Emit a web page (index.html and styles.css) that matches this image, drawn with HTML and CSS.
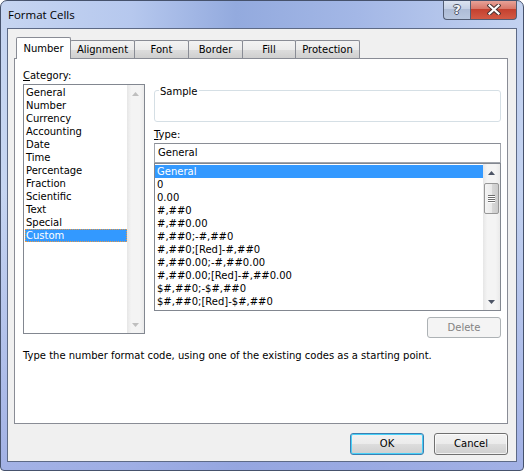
FILE: index.html
```html
<!DOCTYPE html>
<html>
<head>
<meta charset="utf-8">
<link rel="stylesheet" href="styles.css">
</head>
<body>
<div class="window">
  <div class="titlebar">
    <span class="title">Format Cells</span>
    <div class="caption-buttons">
      <div class="cap-btn help">?</div>
      <div class="cap-btn close">
        <svg width="14" height="11" viewBox="0 0 14 11">
          <path d="M2.5 1.5 L11.5 9.5 M11.5 1.5 L2.5 9.5" stroke="#4a3434" stroke-width="4.2" stroke-linecap="square" fill="none"/>
          <path d="M2.5 1.5 L11.5 9.5 M11.5 1.5 L2.5 9.5" stroke="#ffffff" stroke-width="2.2" stroke-linecap="square" fill="none"/>
        </svg>
      </div>
    </div>
  </div>
  <div class="client">
    <div class="tabs">
      <div class="tab active w-number">Number</div>
      <div class="tab w-align">Alignment</div>
      <div class="tab w-font">Font</div>
      <div class="tab w-border">Border</div>
      <div class="tab w-fill">Fill</div>
      <div class="tab w-prot">Protection</div>
    </div>
    <div class="panel">
      <div class="columns">
        <div class="col-left">
          <div class="label"><u>C</u>ategory:</div>
          <div class="listbox cat-list">
            <div class="items">
              <div class="row">General</div>
              <div class="row">Number</div>
              <div class="row">Currency</div>
              <div class="row">Accounting</div>
              <div class="row">Date</div>
              <div class="row">Time</div>
              <div class="row">Percentage</div>
              <div class="row">Fraction</div>
              <div class="row">Scientific</div>
              <div class="row">Text</div>
              <div class="row">Special</div>
              <div class="row selected focused">Custom</div>
            </div>
            <div class="scrollbar disabled">
              <div class="sb-btn"><svg width="7" height="4" viewBox="0 0 7 4"><path d="M0 4 L3.5 0 L7 4 Z" class="arrow"/></svg></div>
              <div class="sb-track"></div>
              <div class="sb-btn"><svg width="7" height="4" viewBox="0 0 7 4"><path d="M0 0 L7 0 L3.5 4 Z" class="arrow"/></svg></div>
            </div>
          </div>
        </div>
        <div class="col-right">
          <div class="sample"><span class="sample-label">Sample</span></div>
          <div class="label type-label"><u>T</u>ype:</div>
          <div class="textbox">General</div>
          <div class="listbox type-list">
            <div class="items">
              <div class="row selected">General</div>
              <div class="row">0</div>
              <div class="row">0.00</div>
              <div class="row">#,##0</div>
              <div class="row">#,##0.00</div>
              <div class="row">#,##0;-#,##0</div>
              <div class="row">#,##0;[Red]-#,##0</div>
              <div class="row">#,##0.00;-#,##0.00</div>
              <div class="row">#,##0.00;[Red]-#,##0.00</div>
              <div class="row">$#,##0;-$#,##0</div>
              <div class="row">$#,##0;[Red]-$#,##0</div>
            </div>
            <div class="scrollbar">
              <div class="sb-btn"><svg width="7" height="4" viewBox="0 0 7 4"><path d="M0 4 L3.5 0 L7 4 Z" class="arrow"/></svg></div>
              <div class="sb-track">
                <div class="thumb">
                  <div class="grip"></div>
                  <div class="grip"></div>
                  <div class="grip"></div>
                  <div class="grip"></div>
                </div>
              </div>
              <div class="sb-btn"><svg width="7" height="4" viewBox="0 0 7 4"><path d="M0 0 L7 0 L3.5 4 Z" class="arrow"/></svg></div>
            </div>
          </div>
          <div class="delete-row"><div class="btn btn-disabled">Delete</div></div>
        </div>
      </div>
      <div class="desc">Type the number format code, using one of the existing codes as a starting point.</div>
    </div>
    <div class="buttons">
      <div class="btn btn-default">OK</div>
      <div class="btn">Cancel</div>
    </div>
  </div>
</div>
</body>
</html>
```
FILE: styles.css
```css
* { box-sizing: border-box; }
html, body { margin: 0; padding: 0; background: #ffffff; }
body {
  font-family: "DejaVu Sans", "Liberation Sans", sans-serif;
  font-size: 10px;
  color: #000;
}
.window {
  width: 524px;
  height: 471px;
  display: flex;
  flex-direction: column;
  border: 1px solid #46526c;
  border-radius: 7px 7px 4px 4px;
  overflow: hidden;
  background:
    linear-gradient(to bottom, rgba(150,165,225,0) 40%, rgba(150,165,225,0.75) 100%),
    linear-gradient(to right, #c6d5f1 0%, #b6c8ee 25%, #93aade 45%, #a3b7e6 68%, #c3d2f0 100%);
}
.titlebar {
  height: 27px;
  flex: none;
  display: flex;
  align-items: flex-start;
  padding-left: 7px;
}
.title {
  font-family: "Open Sans", "Liberation Sans", sans-serif;
  font-size: 11.5px;
  line-height: 16px;
  margin-top: 6px;
  color: #000;
}
.caption-buttons {
  margin-left: auto;
  margin-right: 6px;
  display: flex;
  height: 20px;
  margin-top: -1px;
}
.cap-btn {
  height: 20px;
  border: 1px solid #535d73;
  border-top: none;
  display: flex;
  align-items: center;
  justify-content: center;
}
.help {
  width: 27px;
  border-right: none;
  border-radius: 0 0 0 4px;
  background: linear-gradient(to bottom, #dfe6f2 0%, #c6d1e6 45%, #aebcd6 50%, #b9c7df 100%);
  color: #f4f6fa;
  font-family: "DejaVu Sans", sans-serif;
  font-weight: bold;
  font-size: 13px;
  line-height: 16px;
  text-shadow: -1px 0 #4c5466, 1px 0 #4c5466, 0 -1px #4c5466, 0 1px #4c5466;
}
.close {
  width: 47px;
  border-radius: 0 0 4px 0;
  background: linear-gradient(to bottom, #e9a89e 0%, #d9786a 45%, #c4412f 50%, #d25a45 100%);
}
.client {
  flex: 1;
  margin: 0 6px 8px 6px;
  border: 1px solid #5d6a86;
  background: #f0f0f0;
  padding: 8px 8px 6px 6px;
  display: flex;
  flex-direction: column;
}
.tabs {
  position: relative;
  z-index: 1;
  height: 21px;
  flex: none;
  display: flex;
  align-items: flex-end;
  padding-left: 2px;
}
.tab {
  height: 18px;
  border: 1px solid #898c95;
  border-bottom: none;
  margin-left: -1px;
  background: linear-gradient(to bottom, #f3f3f3 0%, #ebebeb 50%, #dddddd 51%, #cfcfcf 100%);
  text-align: center;
  line-height: 17px;
  border-radius: 2px 2px 0 0;
}
.tab.active {
  margin-left: 0;
  height: 22px;
  margin-bottom: -1px;
  background: #ffffff;
  line-height: 21px;
}
.w-number { width: 55px; }
.w-align { width: 65px; }
.w-font { width: 55px; }
.w-border { width: 55px; }
.w-fill { width: 54px; }
.w-prot { width: 65px; }
.panel {
  flex: 1;
  border: 1px solid #898c95;
  background: #ffffff;
  padding: 10px 6px 0 8px;
}
.columns {
  display: flex;
  align-items: flex-start;
}
.col-left {
  width: 122px;
  margin-right: 9px;
}
.col-right {
  flex: 1;
}
.label {
  height: 13px;
  line-height: 13px;
}
.listbox {
  border: 1px solid #828790;
  display: flex;
  background: #fff;
}
.cat-list {
  margin-top: 2px;
  height: 250px;
}
.items {
  flex: 1;
  padding-top: 1px;
  min-width: 0;
}
.row {
  height: 13px;
  line-height: 13px;
  white-space: nowrap;
}
.cat-list .row {
  margin-left: 1px;
  padding-left: 1px;
}
.type-list .row {
  padding-left: 2px;
}
.row.selected {
  background: #3399ff;
  color: #ffffff;
}
.row.focused {
  outline: 1px dotted #e89a45;
  outline-offset: -1px;
}
.scrollbar {
  width: 17px;
  flex: none;
  display: flex;
  flex-direction: column;
  background: linear-gradient(to right, #e6e6e6 0%, #f4f4f4 25%, #f4f4f4 75%, #eaeaea 100%);
}
.sb-btn {
  height: 17px;
  flex: none;
  display: flex;
  align-items: center;
  justify-content: center;
}
.sb-track {
  flex: 1;
  padding-top: 2px;
}
.arrow { fill: #4d5566; }
.scrollbar.disabled .arrow { fill: #bfbfbf; }
.thumb {
  width: 15px;
  height: 31px;
  margin-left: 1px;
  border: 1px solid #979797;
  border-radius: 2px;
  background: linear-gradient(to right, #f4f4f4 0%, #eaeaea 50%, #d8d8d8 51%, #cccccc 100%);
  display: flex;
  flex-direction: column;
  align-items: center;
  justify-content: center;
  gap: 1px;
}
.grip {
  width: 7px;
  height: 1px;
  background: #6e6e6e;
  box-shadow: 0 1px 0 #ffffff;
}
.sample {
  position: relative;
  margin-top: 21px;
  height: 32px;
  border: 1px solid #d5dfe5;
  border-radius: 3px;
}
.sample-label {
  position: absolute;
  top: -6px;
  left: 4px;
  padding: 0 1px;
  background: #ffffff;
  line-height: 13px;
}
.type-label {
  margin-top: 6px;
}
.textbox {
  margin-top: 2px;
  height: 20px;
  border: 1px solid #a2a6ad;
  border-top-color: #8a8e96;
  padding-left: 3px;
  line-height: 18px;
}
.type-list {
  height: 148px;
}
.delete-row {
  margin-top: 6px;
  display: flex;
  justify-content: flex-end;
}
.btn {
  width: 74px;
  height: 22px;
  border: 1px solid #707070;
  border-radius: 3px;
  background: linear-gradient(to bottom, #f2f2f2 0%, #ebebeb 50%, #dddddd 51%, #cfcfcf 100%);
  box-shadow: inset 0 0 0 1px rgba(255,255,255,0.7);
  text-align: center;
  line-height: 20px;
}
.btn-disabled {
  height: 21px;
  line-height: 19px;
  border-color: #adb2b5;
  background: #f4f4f4;
  box-shadow: none;
  color: #838383;
}
.btn-default {
  border-color: #3c7fb1;
  box-shadow: inset 0 0 0 1px #48d0f8;
}
.desc {
  margin-top: 11px;
  line-height: 13px;
}
.buttons {
  flex: none;
  margin-top: 9px;
  display: flex;
  justify-content: flex-end;
  gap: 10px;
}
```
